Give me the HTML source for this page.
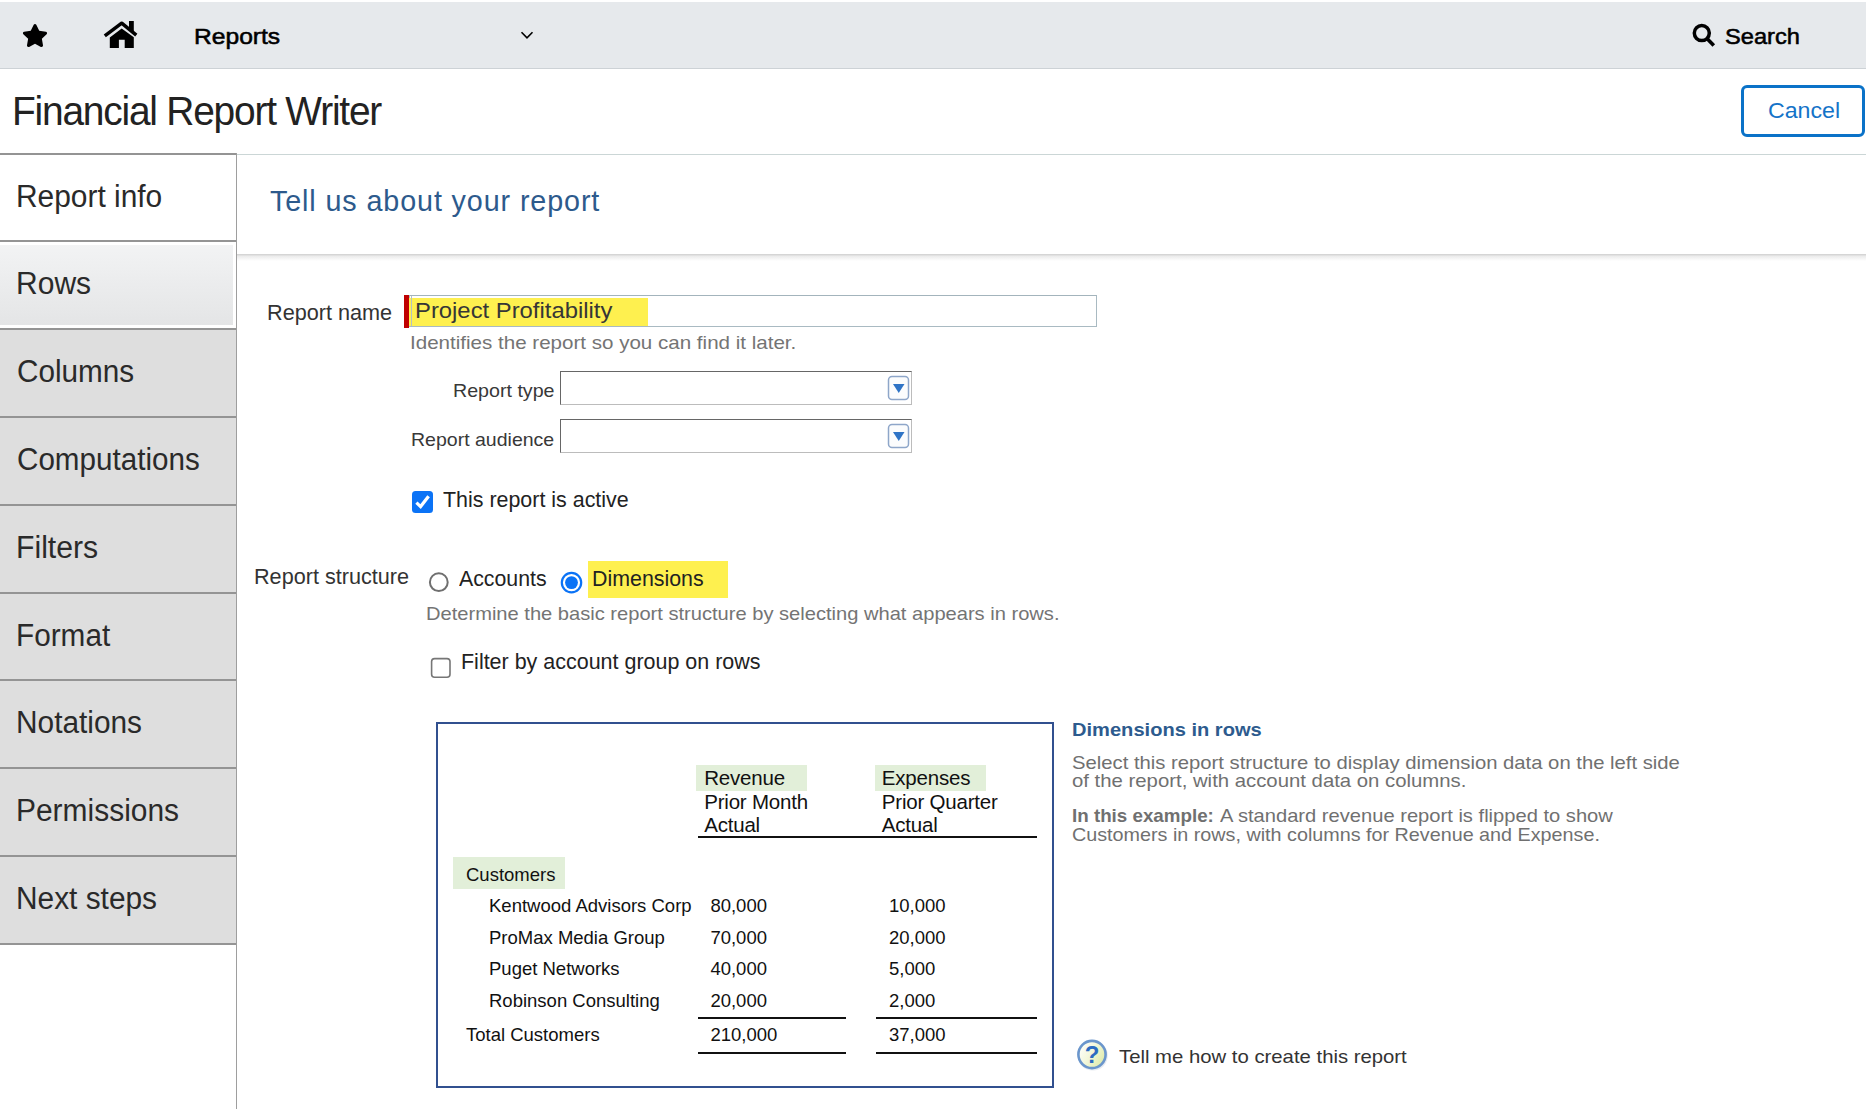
<!DOCTYPE html>
<html><head><meta charset="utf-8"><title>Financial Report Writer</title>
<style>
html,body{margin:0;padding:0;}
body{width:1866px;height:1109px;position:relative;overflow:hidden;background:#fff;font-family:"Liberation Sans",sans-serif;}
.t{position:absolute;white-space:nowrap;}
.b{position:absolute;box-sizing:border-box;}
svg.b{overflow:visible;}
</style></head><body>
<div class="b" style="left:0px;top:2px;width:1866px;height:66px;background:#e6e9ec;"></div>
<div class="b" style="left:0px;top:68px;width:1866px;height:1px;background:#cdd2d6;"></div>
<svg class="b" style="left:21.8px;top:22.6px" width="26" height="25" viewBox="0 0 576 512"><path fill="#000" d="M259.3 17.8L194 150.2 47.9 171.5c-26.2 3.8-36.7 36.1-17.7 54.6l105.7 103-25 145.5c-4.5 26.3 23.2 46 46.4 33.7L288 439.6l130.7 68.7c23.2 12.2 50.9-7.4 46.4-33.7l-25-145.5 105.7-103c19-18.5 8.5-50.8-17.7-54.6L382 150.2 316.7 17.8c-11.7-23.6-45.6-23.9-57.4 0z"/></svg>
<svg class="b" style="left:98px;top:15px" width="46" height="38" viewBox="0 0 46 38"><path d="M6.8 20.9 L23.7 8.2 L38.3 20.2" fill="none" stroke="#000" stroke-width="3.5" stroke-linejoin="round"/><rect x="31" y="6" width="4.8" height="10" fill="#000"/><path d="M11.8 22.4 L23.7 13.4 L35.8 22.2 V32.9 H26.7 V24.7 H20.9 V32.9 H11.8 Z" fill="#000"/></svg>
<div class="t" style="left:194.23px;top:22.50px;font-size:22.5px;line-height:27.00px;color:#000;font-weight:400;letter-spacing:0px;transform:scaleX(1.0937);transform-origin:0 0;-webkit-text-stroke:0.55px #000;">Reports</div>
<svg class="b" style="left:518px;top:28px" width="18" height="14" viewBox="0 0 18 14"><path d="M3.5 4.2 L9 9.8 L14.5 4.2" fill="none" stroke="#000" stroke-width="1.6"/></svg>
<svg class="b" style="left:1690px;top:22px" width="28" height="28" viewBox="0 0 28 28"><circle cx="11.8" cy="11.1" r="7.5" fill="none" stroke="#000" stroke-width="3.5"/><path d="M17.2 16.8 L23.8 23.6" stroke="#000" stroke-width="3.6" stroke-linecap="butt"/></svg>
<div class="t" style="left:1725.24px;top:22.90px;font-size:22.5px;line-height:27.00px;color:#000;font-weight:400;letter-spacing:0px;transform:scaleX(1.0504);transform-origin:0 0;-webkit-text-stroke:0.55px #000;">Search</div>
<div class="t" style="left:12.09px;top:85.62px;font-size:41.5px;line-height:49.80px;color:#222;font-weight:400;letter-spacing:-1.3px;transform:scaleX(0.9374);transform-origin:0 0;">Financial Report Writer</div>
<div class="b" style="left:1741px;top:85px;width:124px;height:52px;border:3px solid #0a72c8;border-radius:6px;background:#fff;"></div>
<div class="t" style="left:1768.44px;top:97.30px;font-size:22.5px;line-height:27.00px;color:#1473c8;font-weight:400;letter-spacing:0px;transform:scaleX(1.0299);transform-origin:0 0;">Cancel</div>
<div class="b" style="left:0px;top:153px;width:236px;height:2px;background:#949494;"></div>
<div class="b" style="left:237px;top:154px;width:1629px;height:1px;background:#cbd6d6;"></div>
<div class="b" style="left:0px;top:155px;width:236px;height:85px;background:#fff;"></div>
<div class="b" style="left:0px;top:240px;width:236px;height:2px;background:#949494;"></div>
<div class="t" style="left:16.01px;top:177.56px;font-size:31px;line-height:37.20px;color:#2a2a2a;font-weight:400;letter-spacing:0px;transform:scaleX(0.9644);transform-origin:0 0;">Report info</div>
<div class="b" style="left:0px;top:242px;width:236px;height:86px;background:#fff;"></div>
<div class="b" style="left:0px;top:245px;width:233px;height:80px;background:linear-gradient(#f2f3f4,#e4e5e6);"></div>
<div class="b" style="left:0px;top:328px;width:236px;height:2px;background:#949494;"></div>
<div class="t" style="left:16.00px;top:265.36px;font-size:31px;line-height:37.20px;color:#2a2a2a;font-weight:400;letter-spacing:0px;transform:scaleX(0.9684);transform-origin:0 0;">Rows</div>
<div class="b" style="left:0px;top:330px;width:236px;height:86px;background:#dedede;"></div>
<div class="b" style="left:0px;top:416px;width:236px;height:2px;background:#949494;"></div>
<div class="t" style="left:16.92px;top:353.16px;font-size:31px;line-height:37.20px;color:#2a2a2a;font-weight:400;letter-spacing:0px;transform:scaleX(0.9577);transform-origin:0 0;">Columns</div>
<div class="b" style="left:0px;top:418px;width:236px;height:86px;background:#dedede;"></div>
<div class="b" style="left:0px;top:504px;width:236px;height:2px;background:#949494;"></div>
<div class="t" style="left:16.92px;top:440.96px;font-size:31px;line-height:37.20px;color:#2a2a2a;font-weight:400;letter-spacing:0px;transform:scaleX(0.9553);transform-origin:0 0;">Computations</div>
<div class="b" style="left:0px;top:506px;width:236px;height:86px;background:#dedede;"></div>
<div class="b" style="left:0px;top:592px;width:236px;height:2px;background:#949494;"></div>
<div class="t" style="left:15.99px;top:528.76px;font-size:31px;line-height:37.20px;color:#2a2a2a;font-weight:400;letter-spacing:0px;transform:scaleX(0.9733);transform-origin:0 0;">Filters</div>
<div class="b" style="left:0px;top:594px;width:236px;height:85px;background:#dedede;"></div>
<div class="b" style="left:0px;top:679px;width:236px;height:2px;background:#949494;"></div>
<div class="t" style="left:16.02px;top:616.56px;font-size:31px;line-height:37.20px;color:#2a2a2a;font-weight:400;letter-spacing:0px;transform:scaleX(0.9594);transform-origin:0 0;">Format</div>
<div class="b" style="left:0px;top:681px;width:236px;height:86px;background:#dedede;"></div>
<div class="b" style="left:0px;top:767px;width:236px;height:2px;background:#949494;"></div>
<div class="t" style="left:16.01px;top:704.36px;font-size:31px;line-height:37.20px;color:#2a2a2a;font-weight:400;letter-spacing:0px;transform:scaleX(0.9622);transform-origin:0 0;">Notations</div>
<div class="b" style="left:0px;top:769px;width:236px;height:86px;background:#dedede;"></div>
<div class="b" style="left:0px;top:855px;width:236px;height:2px;background:#949494;"></div>
<div class="t" style="left:16.00px;top:792.16px;font-size:31px;line-height:37.20px;color:#2a2a2a;font-weight:400;letter-spacing:0px;transform:scaleX(0.9659);transform-origin:0 0;">Permissions</div>
<div class="b" style="left:0px;top:857px;width:236px;height:86px;background:#dedede;"></div>
<div class="b" style="left:0px;top:943px;width:236px;height:2px;background:#949494;"></div>
<div class="t" style="left:16.01px;top:879.96px;font-size:31px;line-height:37.20px;color:#2a2a2a;font-weight:400;letter-spacing:0px;transform:scaleX(0.9628);transform-origin:0 0;">Next steps</div>
<div class="b" style="left:236px;top:153px;width:1px;height:956px;background:#9e9e9e;"></div>
<div class="b" style="left:237px;top:254px;width:1629px;height:7px;background:linear-gradient(#cfcfcf,#ececec 35%,#fff);"></div>
<div class="t" style="left:269.93px;top:183.75px;font-size:29px;line-height:34.80px;color:#2d5a8c;font-weight:400;letter-spacing:0.9px;transform:scaleX(0.9898);transform-origin:0 0;">Tell us about your report</div>
<div class="t" style="left:267.27px;top:300.65px;font-size:21.5px;line-height:25.80px;color:#333;font-weight:400;letter-spacing:0px;transform:scaleX(1.0067);transform-origin:0 0;">Report name</div>
<div class="b" style="left:404px;top:295px;width:5px;height:33px;background:#c00000;"></div>
<div class="b" style="left:409px;top:295px;width:688px;height:32px;border:1px solid #a9bac2;border-top:1.5px solid #a3b4bc;background:#fff;"></div>
<div class="b" style="left:409px;top:298px;width:239px;height:28px;background:#fef04f;"></div>
<div class="b" style="left:411px;top:296px;width:1px;height:30px;background:#b3c1c4;"></div>
<div class="t" style="left:415.19px;top:299.25px;font-size:21.5px;line-height:25.80px;color:#363636;font-weight:400;letter-spacing:0px;transform:scaleX(1.1083);transform-origin:0 0;">Project Profitability</div>
<div class="t" style="left:409.65px;top:332.29px;font-size:18.5px;line-height:22.20px;color:#747474;font-weight:400;letter-spacing:0px;transform:scaleX(1.1113);transform-origin:0 0;">Identifies the report so you can find it later.</div>
<div class="t" style="left:452.83px;top:380.49px;font-size:18.5px;line-height:22.20px;color:#383838;font-weight:400;letter-spacing:0px;transform:scaleX(1.0618);transform-origin:0 0;">Report type</div>
<div class="b" style="left:560px;top:371px;width:352px;height:34px;border:1px solid #bcbcbc;border-top-color:#666;border-left-color:#666;background:#fff;"></div>
<svg class="b" style="left:887px;top:375px" width="24" height="26" viewBox="0 0 24 26"><rect x="1.5" y="1.5" width="20" height="23" rx="3.5" fill="#fbfcfd" stroke="#8ea6c9" stroke-width="1.5"/><path d="M6 9 L17.5 9 L11.75 18 Z" fill="#2f74c6"/></svg>
<div class="t" style="left:411.24px;top:428.79px;font-size:18.5px;line-height:22.20px;color:#383838;font-weight:400;letter-spacing:0px;transform:scaleX(1.0548);transform-origin:0 0;">Report audience</div>
<div class="b" style="left:560px;top:419px;width:352px;height:34px;border:1px solid #bcbcbc;border-top-color:#666;border-left-color:#666;background:#fff;"></div>
<svg class="b" style="left:887px;top:423px" width="24" height="26" viewBox="0 0 24 26"><rect x="1.5" y="1.5" width="20" height="23" rx="3.5" fill="#fbfcfd" stroke="#8ea6c9" stroke-width="1.5"/><path d="M6 9 L17.5 9 L11.75 18 Z" fill="#2f74c6"/></svg>
<div class="b" style="left:412px;top:491px;width:21px;height:22px;background:#0b73f6;border-radius:3.5px;"></div>
<svg class="b" style="left:412px;top:491px" width="21" height="22" viewBox="0 0 21 22"><path d="M4.4 11.6 L8.6 15.6 L16.6 5.2" fill="none" stroke="#fff" stroke-width="3.2"/></svg>
<div class="t" style="left:442.57px;top:486.73px;font-size:21.2px;line-height:25.44px;color:#222;font-weight:400;letter-spacing:0px;transform:scaleX(1.0108);transform-origin:0 0;">This report is active</div>
<div class="t" style="left:254.47px;top:564.85px;font-size:21.5px;line-height:25.80px;color:#333;font-weight:400;letter-spacing:0px;transform:scaleX(1.0062);transform-origin:0 0;">Report structure</div>
<svg class="b" style="left:428px;top:571px" width="22" height="22" viewBox="0 0 22 22"><circle cx="10.8" cy="11.2" r="8.9" fill="#fff" stroke="#6f6f6f" stroke-width="2"/></svg>
<div class="t" style="left:458.80px;top:565.63px;font-size:21.2px;line-height:25.44px;color:#222;font-weight:400;letter-spacing:0px;transform:scaleX(1.0047);transform-origin:0 0;">Accounts</div>
<div class="b" style="left:588px;top:561px;width:140px;height:37px;background:#fef04f;"></div>
<svg class="b" style="left:560px;top:571px" width="23" height="23" viewBox="0 0 23 23"><circle cx="11.5" cy="11.6" r="9.7" fill="#fff" stroke="#0b73f6" stroke-width="2.2"/><circle cx="11.5" cy="11.6" r="6.4" fill="#0b73f6"/></svg>
<div class="t" style="left:591.69px;top:565.63px;font-size:21.2px;line-height:25.44px;color:#222;font-weight:400;letter-spacing:0px;transform:scaleX(1.0089);transform-origin:0 0;">Dimensions</div>
<div class="t" style="left:426.39px;top:603.29px;font-size:18.5px;line-height:22.20px;color:#747474;font-weight:400;letter-spacing:0px;transform:scaleX(1.0866);transform-origin:0 0;">Determine the basic report structure by selecting what appears in rows.</div>
<svg class="b" style="left:430px;top:657px" width="22" height="22" viewBox="0 0 22 22"><rect x="1.6" y="1.6" width="18.4" height="18.6" rx="3" fill="#fff" stroke="#767676" stroke-width="1.6"/></svg>
<div class="t" style="left:460.68px;top:648.53px;font-size:21.2px;line-height:25.44px;color:#222;font-weight:400;letter-spacing:0px;transform:scaleX(1.0133);transform-origin:0 0;">Filter by account group on rows</div>
<div class="b" style="left:436px;top:722px;width:618px;height:366px;border:2px solid #31508f;background:#fff;"></div>
<div class="b" style="left:696px;top:765px;width:111px;height:26px;background:#e2efd9;"></div>
<div class="b" style="left:875px;top:765px;width:111px;height:26px;background:#e2efd9;"></div>
<div class="b" style="left:453px;top:857px;width:112px;height:32px;background:#e2efd9;"></div>
<div class="t" style="left:704.20px;top:766.10px;font-size:20.5px;line-height:24.60px;color:#111;font-weight:400;letter-spacing:-0.2px;">Revenue</div>
<div class="t" style="left:704.20px;top:789.60px;font-size:20.5px;line-height:24.60px;color:#111;font-weight:400;letter-spacing:-0.2px;">Prior Month</div>
<div class="t" style="left:704.20px;top:813.00px;font-size:20.5px;line-height:24.60px;color:#111;font-weight:400;letter-spacing:-0.2px;">Actual</div>
<div class="t" style="left:881.80px;top:766.10px;font-size:20.5px;line-height:24.60px;color:#111;font-weight:400;letter-spacing:-0.2px;">Expenses</div>
<div class="t" style="left:881.80px;top:789.60px;font-size:20.5px;line-height:24.60px;color:#111;font-weight:400;letter-spacing:-0.2px;">Prior Quarter</div>
<div class="t" style="left:881.80px;top:813.00px;font-size:20.5px;line-height:24.60px;color:#111;font-weight:400;letter-spacing:-0.2px;">Actual</div>
<div class="b" style="left:698px;top:836px;width:339px;height:2px;background:#111;"></div>
<div class="t" style="left:466.00px;top:864.29px;font-size:18.5px;line-height:22.20px;color:#111;font-weight:400;letter-spacing:0px;">Customers</div>
<div class="t" style="left:489.00px;top:895.29px;font-size:18.5px;line-height:22.20px;color:#111;font-weight:400;letter-spacing:0px;">Kentwood Advisors Corp</div>
<div class="t" style="left:710.40px;top:895.29px;font-size:18.5px;line-height:22.20px;color:#111;font-weight:400;letter-spacing:0px;">80,000</div>
<div class="t" style="left:889.00px;top:895.29px;font-size:18.5px;line-height:22.20px;color:#111;font-weight:400;letter-spacing:0px;">10,000</div>
<div class="t" style="left:489.00px;top:926.99px;font-size:18.5px;line-height:22.20px;color:#111;font-weight:400;letter-spacing:0px;">ProMax Media Group</div>
<div class="t" style="left:710.40px;top:926.99px;font-size:18.5px;line-height:22.20px;color:#111;font-weight:400;letter-spacing:0px;">70,000</div>
<div class="t" style="left:889.00px;top:926.99px;font-size:18.5px;line-height:22.20px;color:#111;font-weight:400;letter-spacing:0px;">20,000</div>
<div class="t" style="left:489.00px;top:958.49px;font-size:18.5px;line-height:22.20px;color:#111;font-weight:400;letter-spacing:0px;">Puget Networks</div>
<div class="t" style="left:710.40px;top:958.49px;font-size:18.5px;line-height:22.20px;color:#111;font-weight:400;letter-spacing:0px;">40,000</div>
<div class="t" style="left:889.00px;top:958.49px;font-size:18.5px;line-height:22.20px;color:#111;font-weight:400;letter-spacing:0px;">5,000</div>
<div class="t" style="left:489.00px;top:989.89px;font-size:18.5px;line-height:22.20px;color:#111;font-weight:400;letter-spacing:0px;">Robinson Consulting</div>
<div class="t" style="left:710.40px;top:989.89px;font-size:18.5px;line-height:22.20px;color:#111;font-weight:400;letter-spacing:0px;">20,000</div>
<div class="t" style="left:889.00px;top:989.89px;font-size:18.5px;line-height:22.20px;color:#111;font-weight:400;letter-spacing:0px;">2,000</div>
<div class="b" style="left:698px;top:1017px;width:148px;height:2px;background:#111;"></div>
<div class="b" style="left:876px;top:1017px;width:161px;height:2px;background:#111;"></div>
<div class="t" style="left:466.00px;top:1024.29px;font-size:18.5px;line-height:22.20px;color:#111;font-weight:400;letter-spacing:0px;">Total Customers</div>
<div class="t" style="left:710.40px;top:1024.29px;font-size:18.5px;line-height:22.20px;color:#111;font-weight:400;letter-spacing:0px;">210,000</div>
<div class="t" style="left:889.00px;top:1024.29px;font-size:18.5px;line-height:22.20px;color:#111;font-weight:400;letter-spacing:0px;">37,000</div>
<div class="b" style="left:698px;top:1052px;width:148px;height:2px;background:#111;"></div>
<div class="b" style="left:876px;top:1052px;width:161px;height:2px;background:#111;"></div>
<div class="t" style="left:1071.69px;top:718.72px;font-size:19px;line-height:22.80px;color:#2d5b8e;font-weight:700;letter-spacing:0px;transform:scaleX(1.0571);transform-origin:0 0;">Dimensions in rows</div>
<div class="t" style="left:1072.09px;top:752.29px;font-size:18.5px;line-height:22.20px;color:#707070;font-weight:400;letter-spacing:0px;transform:scaleX(1.0946);transform-origin:0 0;">Select this report structure to display dimension data on the left side</div>
<div class="t" style="left:1072.19px;top:769.69px;font-size:18.5px;line-height:22.20px;color:#707070;font-weight:400;letter-spacing:0px;transform:scaleX(1.0990);transform-origin:0 0;">of the report, with account data on columns.</div>
<div class="t" style="left:1072.38px;top:805.19px;font-size:18.5px;line-height:22.20px;color:#707070;font-weight:700;letter-spacing:0px;transform:scaleX(1.0146);transform-origin:0 0;">In this example:</div>
<div class="t" style="left:1219.90px;top:805.19px;font-size:18.5px;line-height:22.20px;color:#707070;font-weight:400;letter-spacing:0px;transform:scaleX(1.0883);transform-origin:0 0;">A standard revenue report is flipped to show</div>
<div class="t" style="left:1072.01px;top:823.79px;font-size:18.5px;line-height:22.20px;color:#707070;font-weight:400;letter-spacing:0px;transform:scaleX(1.0673);transform-origin:0 0;">Customers in rows, with columns for Revenue and Expense.</div>
<svg class="b" style="left:1075px;top:1037px" width="36" height="36" viewBox="0 0 36 36"><defs><linearGradient id="hg" x1="0" y1="0.2" x2="1" y2="0.8"><stop offset="0" stop-color="#ffffff"/><stop offset="0.45" stop-color="#f3f7da"/><stop offset="1" stop-color="#dde9a6"/></linearGradient></defs><circle cx="17.8" cy="18.6" r="15" fill="#c9d3de" opacity="0.45"/><circle cx="17" cy="17.5" r="13.6" fill="url(#hg)" stroke="#6b96cc" stroke-width="2.6"/><text x="17.2" y="26.3" text-anchor="middle" font-family="Liberation Sans" font-weight="700" font-size="24" fill="#2d6cc2">?</text></svg>
<div class="t" style="left:1118.59px;top:1045.99px;font-size:18.5px;line-height:22.20px;color:#333;font-weight:400;letter-spacing:0px;transform:scaleX(1.0975);transform-origin:0 0;">Tell me how to create this report</div>
</body></html>
